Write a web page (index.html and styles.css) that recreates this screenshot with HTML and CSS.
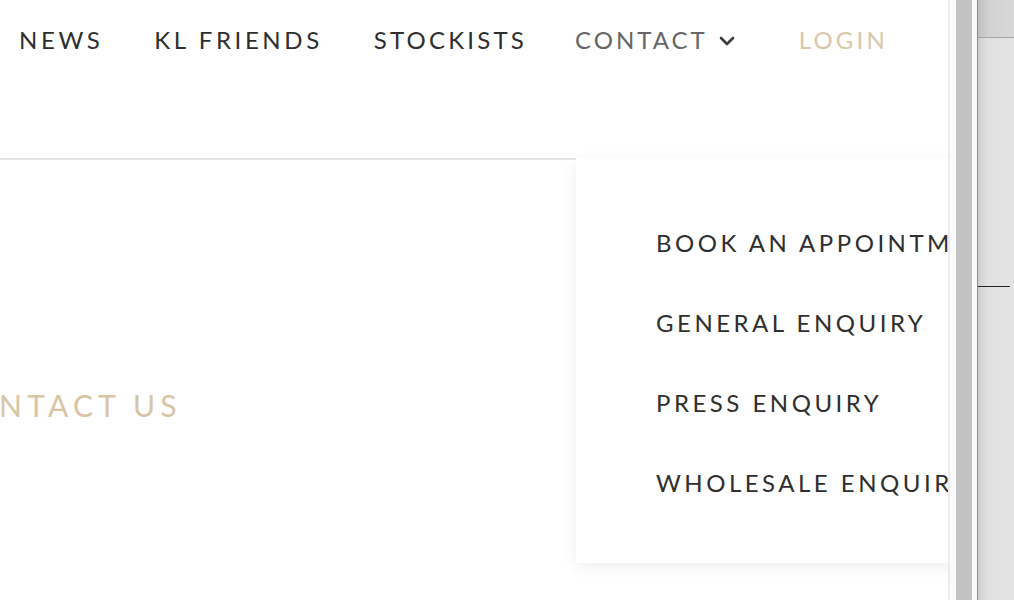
FILE: index.html
```html
<!DOCTYPE html>
<html lang="en">
<head>
    <meta charset="UTF-8">
    <meta name="viewport" content="width=device-width, initial-scale=1.0">
    <title>Contact Us</title>
    <link rel="stylesheet" href="styles.css">
</head>
<body>
    <div class="screen">
        <div class="page">
            <header class="site-header">
                <nav class="main-nav">
                    <a href="#" class="nav-link">NEWS</a>
                    <a href="#" class="nav-link">KL FRIENDS</a>
                    <a href="#" class="nav-link nav-stockists">STOCKISTS</a>
                    <a href="#" class="nav-link nav-contact">CONTACT
                        <svg class="chevron" width="16" height="10" viewBox="0 0 16 10">
                            <path d="M2 2 L8 8 L14 2" fill="none" stroke="#3c3c3c" stroke-width="2.6" stroke-linecap="round" stroke-linejoin="round"/>
                        </svg>
                    </a>
                    <a href="#" class="nav-link nav-login">LOGIN</a>
                </nav>
            </header>

            <main class="contact">
                <h1 class="contact-title">CONTACT US</h1>
            </main>

            <!-- menu du lien contact, ouvert -->
            <ul class="dropdown">
                <li><a href="#">BOOK AN APPOINTMENT</a></li>
                <li><a href="#">GENERAL ENQUIRY</a></li>
                <li><a href="#">PRESS ENQUIRY</a></li>
                <li><a href="#">WHOLESALE ENQUIRY</a></li>
            </ul>
        </div>

        <div class="gutter">
            <div class="thumb"></div>
        </div>

        <div class="desk">
            <div class="desk-top"></div>
            <div class="desk-body">
                <div class="desk-mark"></div>
            </div>
        </div>
    </div>
</body>
</html>
```

FILE: styles.css
```css
/* page contact, menu ouvert */
html, body {
    margin: 0;
    padding: 0;
    height: 100%;
    overflow: hidden;
}
body {
    font-family: Lato, "Open Sans", sans-serif;
    background-color: #fff;
    color: #333;
}
a {
    text-decoration: none;
    color: inherit;
}
.screen {
    display: flex;
    height: 600px;
}
.page {
    position: relative;
    width: 948px;
    flex: none;
    overflow: hidden;
    background-color: #fff;
    border-right: 2px solid #ececec;
}

/* en-tete */
.site-header {
    height: 158px;
    border-bottom: 2px solid #e4e4e4;
    box-sizing: content-box;
}
.main-nav {
    display: flex;
    align-items: flex-start;
    padding: 28px 0 0 19px;
}
.nav-link {
    font-size: 24px;
    line-height: 24px;
    letter-spacing: 3.6px;
    color: #2e2e2e;
    margin-right: 51px;
    white-space: nowrap;
}
.nav-stockists {
    letter-spacing: 3.2px;
    margin-right: 48px;
}
.nav-contact {
    color: #666;
    letter-spacing: 3px;
    display: flex;
    align-items: center;
}
.chevron {
    margin-left: 11px;
    margin-top: 2px;
}
.nav-login {
    color: #dac7a8;
    letter-spacing: 3.2px;
    margin-left: 13px;
}

/* contenu */
.contact {
    padding-top: 225px;
}
.contact-title {
    margin: 0 0 0 -55px;
    font-size: 30px;
    line-height: 40px;
    font-weight: 400;
    letter-spacing: 5.2px;
    color: #d8c5a5;
    white-space: nowrap;
}

/* menu deroulant */
.dropdown {
    position: absolute;
    top: 158px;
    left: 576px;
    width: 420px;
    margin: 0;
    padding: 45px 0 40px 80px;
    list-style: none;
    background-color: #fff;
    box-shadow: 0 4px 14px rgba(0, 0, 0, 0.07);
}
.dropdown li {
    font-size: 24px;
    line-height: 80px;
    letter-spacing: 3.5px;
    color: #2e2e2e;
    white-space: nowrap;
}

/* barre de defilement */
.gutter {
    width: 28px;
    flex: none;
    padding-left: 6px;
    box-sizing: border-box;
    background-color: #fafafa;
    border-right: 1px solid #8a8a8a;
}
.thumb {
    width: 16px;
    height: 100%;
    background-color: #c2c2c2;
}

/* fond a droite */
.desk {
    flex: 1;
    display: flex;
    flex-direction: column;
}
.desk-top {
    height: 37px;
    background: linear-gradient(90deg, #bfbfbf, #d2d2d2 30%, #d8d8d8);
    border-bottom: 1px solid #a5a5a5;
}
.desk-body {
    flex: 1;
    padding-top: 248px;
    background: linear-gradient(90deg, #cdcdcd, #e0e0e0 25%, #e4e4e4);
}
.desk-mark {
    width: 32px;
    height: 1px;
    background-color: #222;
}
```
